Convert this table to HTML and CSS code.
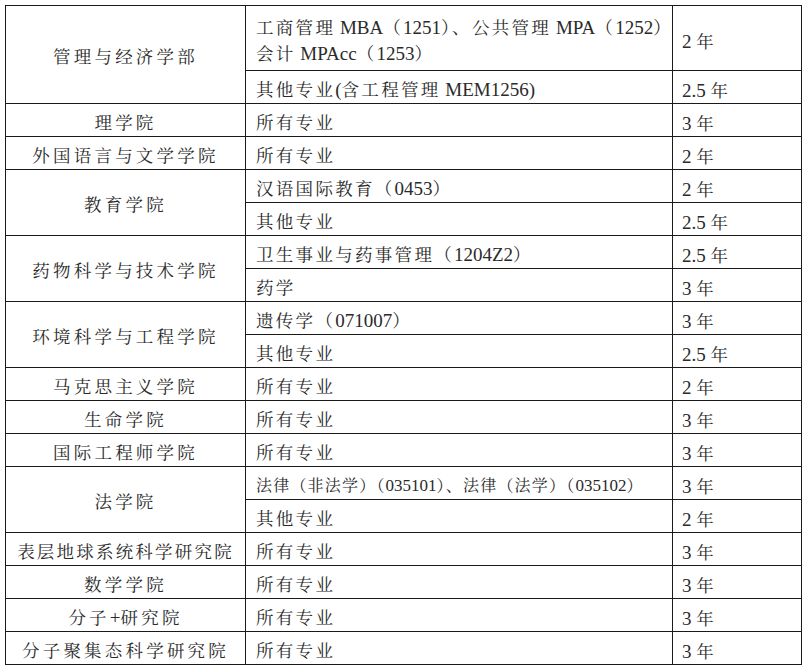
FILE: index.html
```html
<!DOCTYPE html>
<html lang="zh-CN">
<head>
<meta charset="utf-8">
<title>学制表</title>
<link rel="stylesheet" href="styles.css">
</head>
<body>
<table class="tbl">
  <colgroup>
    <col class="c1"><col class="c2"><col class="c3">
  </colgroup>
  <tbody>
    <tr class="tall">
      <td class="dept" rowspan="2">管理与经济学部</td>
      <td class="major two">工商管理<span class="lat"> MBA</span>（<span class="lat">1251</span>）、公共管理<span class="lat"> MPA</span>（<span class="lat">1252</span>）<br>会计<span class="lat"> MPAcc</span>（<span class="lat">1253</span>）</td>
      <td class="yr"><span class="lat">2 </span>年</td>
    </tr>
    <tr>
      <td class="major">其他专业<span class="lat">(</span>含工程管理<span class="lat"> MEM1256)</span></td>
      <td class="yr"><span class="lat">2.5 </span>年</td>
    </tr>
    <tr>
      <td class="dept">理学院</td>
      <td class="major">所有专业</td>
      <td class="yr"><span class="lat">3 </span>年</td>
    </tr>
    <tr>
      <td class="dept">外国语言与文学学院</td>
      <td class="major">所有专业</td>
      <td class="yr"><span class="lat">2 </span>年</td>
    </tr>
    <tr>
      <td class="dept" rowspan="2">教育学院</td>
      <td class="major">汉语国际教育（<span class="lat">0453</span>）</td>
      <td class="yr"><span class="lat">2 </span>年</td>
    </tr>
    <tr>
      <td class="major">其他专业</td>
      <td class="yr"><span class="lat">2.5 </span>年</td>
    </tr>
    <tr>
      <td class="dept" rowspan="2">药物科学与技术学院</td>
      <td class="major">卫生事业与药事管理（<span class="lat">1204Z2</span>）</td>
      <td class="yr"><span class="lat">2.5 </span>年</td>
    </tr>
    <tr>
      <td class="major">药学</td>
      <td class="yr"><span class="lat">3 </span>年</td>
    </tr>
    <tr>
      <td class="dept" rowspan="2">环境科学与工程学院</td>
      <td class="major">遗传学（<span class="lat">071007</span>）</td>
      <td class="yr"><span class="lat">3 </span>年</td>
    </tr>
    <tr>
      <td class="major">其他专业</td>
      <td class="yr"><span class="lat">2.5 </span>年</td>
    </tr>
    <tr>
      <td class="dept">马克思主义学院</td>
      <td class="major">所有专业</td>
      <td class="yr"><span class="lat">2 </span>年</td>
    </tr>
    <tr>
      <td class="dept">生命学院</td>
      <td class="major">所有专业</td>
      <td class="yr"><span class="lat">3 </span>年</td>
    </tr>
    <tr>
      <td class="dept">国际工程师学院</td>
      <td class="major">所有专业</td>
      <td class="yr"><span class="lat">3 </span>年</td>
    </tr>
    <tr>
      <td class="dept" rowspan="2">法学院</td>
      <td class="major small">法律（非法学）（<span class="lat">035101</span>）、法律（法学）（<span class="lat">035102</span>）</td>
      <td class="yr"><span class="lat">3 </span>年</td>
    </tr>
    <tr>
      <td class="major">其他专业</td>
      <td class="yr"><span class="lat">2 </span>年</td>
    </tr>
    <tr>
      <td class="dept tight">表层地球系统科学研究院</td>
      <td class="major">所有专业</td>
      <td class="yr"><span class="lat">3 </span>年</td>
    </tr>
    <tr>
      <td class="dept">数学学院</td>
      <td class="major">所有专业</td>
      <td class="yr"><span class="lat">3 </span>年</td>
    </tr>
    <tr>
      <td class="dept">分子<span class="lat">+</span>研究院</td>
      <td class="major">所有专业</td>
      <td class="yr"><span class="lat">3 </span>年</td>
    </tr>
    <tr>
      <td class="dept">分子聚集态科学研究院</td>
      <td class="major">所有专业</td>
      <td class="yr"><span class="lat">3 </span>年</td>
    </tr>
  </tbody>
</table>
</body>
</html>
```

FILE: styles.css
```css
html, body {
  margin: 0;
  padding: 0;
  background: #ffffff;
}

body {
  padding: 5px 0 0 5px;
  font-family: "Liberation Serif", "Noto Serif CJK SC", "Noto Sans CJK SC", serif;
  color: #2a2a2a;
}

.tbl {
  border-collapse: collapse;
  table-layout: fixed;
  width: 796px;
}

.c1 { width: 240px; }
.c2 { width: 427px; }
.c3 { width: 129px; }

.tbl tr {
  height: 33px;
}

.tbl tr.tall {
  height: 65px;
}

.tbl td {
  border: 1px solid #1a1a1a;
  padding: 6px 0 0 0;
  vertical-align: middle;
  font-size: 17.5px;
  line-height: 20px;
  white-space: nowrap;
  overflow: hidden;
}

.tbl td.dept {
  text-align: center;
  letter-spacing: 3.2px;
  padding-top: 5px;
}

.tbl td.dept.tight {
  letter-spacing: 2.2px;
}

.tbl td.major {
  padding-left: 10px;
  letter-spacing: 2.3px;
}

.tbl td.two {
  line-height: 26px;
}

.tbl td.major.small {
  font-size: 16px;
  letter-spacing: 1.2px;
}

.tbl td.yr {
  padding-left: 9px;
  padding-top: 7px;
}

.lat {
  letter-spacing: 0;
  font-size: 19px;
  line-height: 20px;
}

.small .lat {
  font-size: 17px;
}
```
